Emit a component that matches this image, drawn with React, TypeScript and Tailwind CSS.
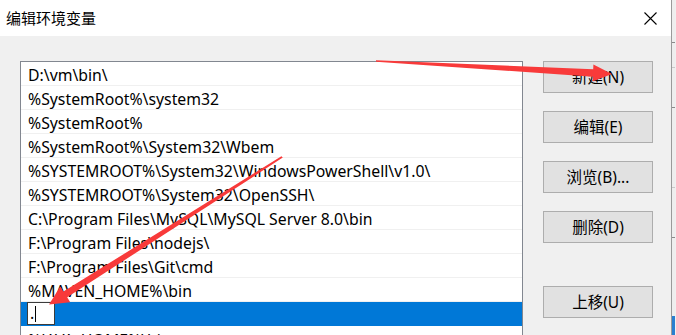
import React from 'react';

const font = { fontFamily: '"Noto Sans", "Noto Sans CJK SC", sans-serif' };

const paths = [
  'D:\\vm\\bin\\',
  '%SystemRoot%\\system32',
  '%SystemRoot%',
  '%SystemRoot%\\System32\\Wbem',
  '%SYSTEMROOT%\\System32\\WindowsPowerShell\\v1.0\\',
  '%SYSTEMROOT%\\System32\\OpenSSH\\',
  'C:\\Program Files\\MySQL\\MySQL Server 8.0\\bin',
  'F:\\Program Files\\nodejs\\',
  'F:\\Program Files\\Git\\cmd',
  '%MAVEN_HOME%\\bin',
];

function Btn({ label, className = '' }: { label: string; className?: string }) {
  return (
    <div className={`h-[32px] w-[110px] flex items-center justify-center pt-[2px] bg-[#e1e1e1] border border-[#adadad] text-[15.5px] text-black ${className}`}>
      {label}
    </div>
  );
}

function Arrows() {
  return (
    <svg className="absolute inset-0 pointer-events-none" width="676" height="335" viewBox="0 0 676 335">
      <polygon
        fill="#f83a3a"
        points="376,60.2 593.2,69.3 593.4,64.5 612,74 592.6,81.5 592.8,76.7 376,61.8"
      />
      <polygon
        fill="#f83a3a"
        points="282.8,157.6 67.2,297.3 70.2,302.2 49,304.5 60.2,286.6 63.4,291.5 281.4,156.2"
      />
    </svg>
  );
}

export default function App() {
  return (
    <div className="relative w-[676px] h-[335px] overflow-hidden flex bg-[#f0f0f0]" style={font}>
      {/* dialog */}
      <div className="w-[672px] h-full flex flex-col border-r border-[#9a9a9a]">
        <div className="h-[36px] bg-white flex items-center justify-between pl-[6px] pr-[14px] shrink-0">
          <span className="text-[15px] text-black leading-none">编辑环境变量</span>
          <svg width="13" height="13" viewBox="0 0 13 13">
            <path d="M0.5 0.5 L12.5 12.5 M12.5 0.5 L0.5 12.5" stroke="#000" strokeWidth="1.1" />
          </svg>
        </div>
        <div className="flex-1 bg-[#f0f0f0] flex pl-[20px] pt-[25px]">
          <div className="w-[503px] h-[300px] bg-white border border-[#828790] flex flex-col">
            {paths.map((p) => (
              <div key={p} className="h-[24px] shrink-0 border-b border-[#f0f0f0] pl-[7px] pt-[5px] flex items-center text-[15.8px] leading-none text-black whitespace-nowrap">
                {p}
              </div>
            ))}
            <div className="h-[24px] shrink-0 bg-[#0078d7] flex items-stretch pl-[6px] pb-[1px]">
              <div className="w-[28px] bg-white border border-[#3c3c3c] flex items-center pl-[2px] text-[15.8px] text-black">
                <span>.</span>
                <span className="w-px h-[16px] bg-black ml-[1px]" />
              </div>
            </div>
            <div className="h-[24px] shrink-0 pl-[7px] pt-[5px] flex items-center text-[15.8px] leading-none text-black whitespace-nowrap">
              %JAVA_HOME%\bin
            </div>
          </div>
          <div className="ml-[20px] flex flex-col">
            <Btn label="新建(N)" />
            <Btn label="编辑(E)" className="mt-[18px]" />
            <Btn label="浏览(B)..." className="mt-[18px]" />
            <Btn label="删除(D)" className="mt-[18px]" />
            <Btn label="上移(U)" className="mt-[43px]" />
          </div>
        </div>
      </div>
      {/* window behind */}
      <div className="w-[3px] h-full bg-[#eeeeee] flex flex-col">
        <div className="h-[43px] border-b border-[#8a8a8a]" />
        <div className="h-[25px] border-b border-[#c8c8c8]" />
        <div className="h-[40px] border-b border-[#8a8a8a]" />
        <div className="h-[80px] border-b border-[#c8c8c8]" />
        <div className="h-[50px] border-b border-[#8a8a8a]" />
        <div className="h-[78px]" />
        <div className="flex-1 bg-[#2a7fd0]" />
      </div>
      <Arrows />
    </div>
  );
}
